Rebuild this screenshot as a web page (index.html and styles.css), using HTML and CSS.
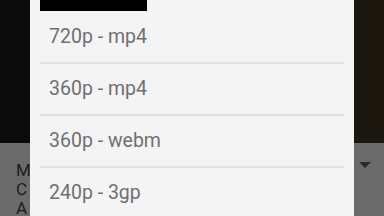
FILE: index.html
```html
<!DOCTYPE html>
<html lang="en">
<head>
  <meta charset="UTF-8" />
  <title>Download quality</title>
  <link rel="stylesheet" href="styles.css">
</head>
<body>
  <div class="screen">
    <!-- dimmed page behind the dialog -->
    <div class="side left">
      <div class="video"></div>
      <div class="info">
        <div>M</div>
        <div>C</div>
        <div>A</div>
      </div>
    </div>

    <div class="dialog">
      <div class="title-bar"></div>
      <div class="option">720p - mp4</div>
      <div class="option">360p - mp4</div>
      <div class="option">360p - webm</div>
      <div class="option">240p - 3gp</div>
    </div>

    <div class="side right">
      <div class="video"></div>
      <div class="info">
        <span class="caret"></span>
      </div>
    </div>
  </div>
</body>
</html>
```

FILE: styles.css
```css
body {
  margin: 0;
  font-family: Roboto, "Noto Sans", sans-serif;
  background: #0b0b0b;
}

.screen {
  display: flex;
  width: 384px;
  height: 216px;
  overflow: hidden;
}

.side {
  width: 30px;
  flex-shrink: 0;
  display: flex;
  flex-direction: column;
  overflow: hidden;
}

.side .video {
  height: 143px;
  flex-shrink: 0;
}

.left .video {
  background: #0b0b0b;
}

.right .video {
  background: #1b160e;
}

.info {
  flex: 1;
  background: #6b6b6b;
}

.left .info {
  padding: 18px 0 0 16px;
  font-size: 17px;
  line-height: 19px;
  color: #1c1c1c;
}

.right .info {
  position: relative;
}

.caret {
  position: absolute;
  left: 5px;
  top: 19px;
  width: 0;
  height: 0;
  border-left: 6px solid transparent;
  border-right: 6px solid transparent;
  border-top: 6px solid #2a2a2a;
}

.dialog {
  width: 304px;
  flex-shrink: 0;
  padding: 0 10px;
  background: #f4f4f4;
}

.title-bar {
  width: 107px;
  height: 11px;
  margin-bottom: 1px;
  background: #000;
}

.option {
  height: 50px;
  line-height: 50px;
  padding-left: 9px;
  font-size: 19.5px;
  color: #707070;
  border-bottom: 2px solid #e1e1e1;
}
```
